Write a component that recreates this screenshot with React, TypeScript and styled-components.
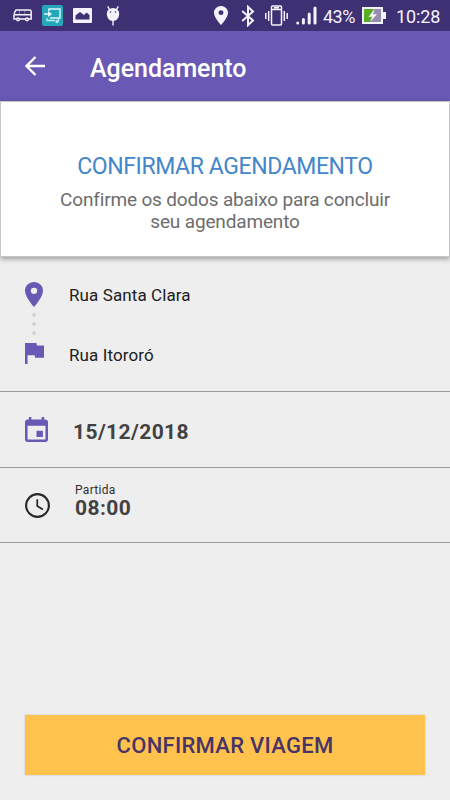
import React from 'react';
import styled, { createGlobalStyle } from 'styled-components';

const GlobalStyle = createGlobalStyle`
  * { box-sizing: border-box; }
  body { margin: 0; background: #eeeeee; font-family: Roboto, sans-serif; }
`;

const Screen = styled.div`
  display: flex;
  flex-direction: column;
  width: 450px;
  height: 800px;
  overflow: hidden;
  background: #eeeeee;
`;

const StatusBar = styled.div`
  display: flex;
  align-items: center;
  flex: none;
  height: 31px;
  padding-left: 13px;
  background: #3e3073;
  color: #f4f2fa;
`;

const Icon = styled.svg<{ $gap?: number }>`
  display: block;
  flex: none;
  margin-left: ${(p) => p.$gap ?? 0}px;
`;

const StatusText = styled.span<{ $gap: number; $spacing: number }>`
  margin-left: ${(p) => p.$gap}px;
  padding-top: 2px;
  font-size: 18px;
  line-height: 22px;
  letter-spacing: ${(p) => p.$spacing}px;
  white-space: nowrap;
`;

const AppBar = styled.header`
  display: flex;
  align-items: center;
  flex: none;
  height: 70px;
  padding: 0 0 0 25px;
  background: #6a59b4;
  color: #ffffff;
`;

const BackButton = styled.button`
  display: flex;
  width: 22px;
  padding: 0;
  border: 0;
  background: none;
  color: inherit;
`;

const Title = styled.h1`
  margin: 6px 0 0 43px;
  font-size: 25px;
  line-height: 30px;
  font-weight: 500;
  letter-spacing: -0.04px;
`;

const Card = styled.section`
  flex: none;
  height: 156px;
  padding-top: 50px;
  border: 1px solid #c6c6c8;
  background: #ffffff;
  box-shadow: 0 2px 5px rgba(0, 0, 0, 0.35);
  text-align: center;
`;

const CardTitle = styled.h2`
  margin: 0;
  color: #4386c9;
  font-size: 23px;
  line-height: 30px;
  font-weight: 400;
  letter-spacing: -0.4px;
`;

const CardText = styled.p`
  margin: 7px 0 0;
  color: #6d6d6d;
  font-size: 19px;
  line-height: 22px;
  letter-spacing: -0.16px;
`;

const Row = styled.div<{ $height: number }>`
  display: flex;
  flex: none;
  height: ${(p) => p.$height}px;
  padding-left: 25px;
  border-bottom: 1px solid #9b9b9b;
`;

const RouteMarks = styled.div`
  display: flex;
  flex-direction: column;
  width: 44px;
  padding-top: 25px;
`;

const Dots = styled.div`
  display: flex;
  flex-direction: column;
  gap: 5px;
  margin: 6px 0 8px 7px;
`;

const Dot = styled.i`
  width: 4px;
  height: 4px;
  border-radius: 50%;
  background: #d3d3d3;
`;

const Stops = styled.div`
  display: flex;
  flex-direction: column;
  gap: 36px;
  padding-top: 26px;
`;

const Stop = styled.span`
  color: #202020;
  font-size: 17px;
  line-height: 24px;
  letter-spacing: 0.1px;
`;

const IconCell = styled.div<{ $top: number; $width: number }>`
  width: ${(p) => p.$width}px;
  padding-top: ${(p) => p.$top}px;
`;

const DateText = styled.strong`
  padding-top: 26px;
  color: #424242;
  font-size: 21px;
  line-height: 28px;
  font-weight: 700;
  letter-spacing: 0.4px;
`;

const Departure = styled.div`
  display: flex;
  flex-direction: column;
  padding-top: 14px;
`;

const Caption = styled.span`
  color: #303030;
  font-size: 12px;
  line-height: 16px;
  letter-spacing: 0.3px;
`;

const TimeText = styled.strong`
  color: #424242;
  font-size: 21px;
  line-height: 20px;
  font-weight: 700;
  letter-spacing: 0.4px;
`;

const ConfirmButton = styled.button`
  flex: none;
  height: 60px;
  margin: auto 25px 25px;
  padding: 2px 0 0;
  border: 0;
  background: #ffc34d;
  box-shadow: 0 0 2px rgba(0, 0, 0, 0.18);
  color: #483467;
  font: 500 22px/30px Roboto, sans-serif;
  letter-spacing: 0.28px;
`;

function StatusIcons() {
  return (
    <>
      <Icon width="19" height="13" viewBox="0 0 19 13" fill="none" stroke="currentColor" strokeWidth="1.5">
        <path d="M3 1h13.500q1.700 0 1.700 1.700v7.300H1V6.500q0-3 2-5.500zM1.500 5.800h16.500" />
        <path d="M6.500 1v4.500M11.800 1v4.500" strokeWidth=".7" opacity=".5" />
        <circle cx="5" cy="10.300" r="1.400" fill="#3e3073" />
        <circle cx="14" cy="10.300" r="1.400" fill="#3e3073" />
      </Icon>
      <Icon $gap={10} width="21" height="21" viewBox="0 0 21 21" fill="none">
        <rect width="21" height="21" rx="2" fill="#25a6b9" />
        <path d="M7 6V4h11v9H8M2 9h5" stroke="#d9f6f8" strokeWidth="1.500" />
        <path d="m6 6 4 3-4 3z" fill="#e6fbfc" />
        <path d="M5 13v2.500h8M16.500 13v3" stroke="#bdeef1" strokeWidth="1.300" />
        <circle cx="15" cy="16.500" r="1.600" fill="#bdeef1" />
      </Icon>
      <Icon $gap={10} width="19" height="15" viewBox="0 0 19 15">
        <path fill="currentColor" fillRule="evenodd" d="M1 0h17q1 0 1 1v13q0 1-1 1H1q-1 0-1-1V1q0-1 1-1zM2.500 11.500h14V7l-3-2.500L11 7 7 4 2.500 7.500z" />
      </Icon>
      <Icon $gap={14} width="14" height="20" viewBox="0 0 14 20">
        <path d="M3.500 3.500 2 .8M10.500 3.500 12 .8M7 12v7" stroke="currentColor" strokeWidth="1.400" strokeLinecap="round" />
        <path fill="currentColor" d="M.8 7.500a6.200 5.500 0 0 1 12.400 0c0 4-2.200 7.500-6.200 7.500S.8 11.500.8 7.500z" />
        <circle cx="4.500" cy="6" r=".8" fill="#3e3073" />
        <circle cx="9.500" cy="6" r=".8" fill="#3e3073" />
      </Icon>
      <Icon $gap={94} width="14" height="19" viewBox="5 2 14 20" preserveAspectRatio="none">
        <path fill="currentColor" d="M12 2C8.130 2 5 5.130 5 9c0 5.250 7 13 7 13s7-7.750 7-13c0-3.870-3.130-7-7-7zm0 9.500a2.500 2.500 0 1 1 0-5 2.500 2.500 0 0 1 0 5z" />
      </Icon>
      <Icon $gap={13} width="14" height="22" viewBox="0 0 14 22" fill="none" stroke="currentColor" strokeWidth="2">
        <path d="M1.200 6 12 15.500l-5 4.700V1.800l5 4.700L1.200 16" />
      </Icon>
      <Icon $gap={10} width="23" height="21" viewBox="0 0 23 21" fill="none" stroke="currentColor" strokeWidth="1.500">
        <rect x="6.500" y="1" width="10" height="19" rx="1" />
        <path d="M6.500 4.500h10M9 2.700h5M3.700 6v10M.8 8v6M19.300 6v10M22.200 8v6" />
      </Icon>
      <Icon $gap={8} width="21" height="19" viewBox="0 0 21 19" stroke="currentColor" strokeWidth="3" strokeLinecap="round">
        <path d="M1.700 17v0M7.400 17v-3.500M13.200 17V8M19 17V2" />
      </Icon>
    </>
  );
}

export default function App() {
  return (
    <>
      <GlobalStyle />
      <Screen>
        <StatusBar>
          <StatusIcons />
          <StatusText $gap={6} $spacing={-0.5}>43%</StatusText>
          <Icon $gap={7} width="24" height="17" viewBox="0 0 24 17">
            <path fill="currentColor" d="M0 0h21v5h3v7h-3v5H0z" />
            <path fill="#978eae" d="M2 2h17v13H2z" />
            <path fill="#56ae20" d="M2 2h9L8 15H2z" />
            <path fill="#fff" d="m12.500 2-6 8 4-.5L8 15l7-8-4 .5z" />
          </Icon>
          <StatusText $gap={10} $spacing={-0.1}>10:28</StatusText>
        </StatusBar>
        <AppBar>
          <BackButton aria-label="Voltar">
            <Icon width="21" height="20" viewBox="0 0 21 20" fill="none" stroke="currentColor" strokeWidth="2.300">
              <path d="M20 10H2M10.500 1 1.500 10l9 9" />
            </Icon>
          </BackButton>
          <Title>Agendamento</Title>
        </AppBar>
        <Card>
          <CardTitle>CONFIRMAR AGENDAMENTO</CardTitle>
          <CardText>
            Confirme os dodos abaixo para concluir
            <br />
            seu agendamento
          </CardText>
        </Card>
        <Row $height={135}>
          <RouteMarks>
            <Icon width="18" height="25" viewBox="5 2 14 20" preserveAspectRatio="none">
              <path fill="#6a59b4" d="M12 2C8.130 2 5 5.130 5 9c0 5.250 7 13 7 13s7-7.750 7-13c0-3.870-3.130-7-7-7zm0 9.500a2.500 2.500 0 1 1 0-5 2.500 2.500 0 0 1 0 5z" />
            </Icon>
            <Dots>
              <Dot />
              <Dot />
              <Dot />
            </Dots>
            <Icon width="19" height="21" viewBox="5 4 15 17" preserveAspectRatio="none">
              <path fill="#6a59b4" d="M14.400 6 14 4H5v17h2v-7h5.600l.4 2h7V6z" />
            </Icon>
          </RouteMarks>
          <Stops>
            <Stop>Rua Santa Clara</Stop>
            <Stop>Rua Itororó</Stop>
          </Stops>
        </Row>
        <Row $height={76}>
          <IconCell $top={25} $width={48}>
            <Icon width="23" height="25" viewBox="3 1 18 20" preserveAspectRatio="none">
              <path fill="#6a59b4" d="M17 12h-5v5h5v-5zM16 1v2H8V1H6v2H5c-1.110 0-1.990.9-1.990 2L3 19c0 1.100.89 2 2 2h14c1.100 0 2-.9 2-2V5c0-1.100-.9-2-2-2h-1V1h-2zm3 18H5V8h14v11z" />
            </Icon>
          </IconCell>
          <DateText>15/12/2018</DateText>
        </Row>
        <Row $height={75}>
          <IconCell $top={25} $width={50}>
            <Icon width="25" height="25" viewBox="2 2 20 20" fill="none" stroke="#272727">
              <circle cx="12" cy="12" r="9.100" strokeWidth="1.700" />
              <path d="M11.800 7v5.500l4.500 2.700" strokeWidth="1.400" />
            </Icon>
          </IconCell>
          <Departure>
            <Caption>Partida</Caption>
            <TimeText>08:00</TimeText>
          </Departure>
        </Row>
        <ConfirmButton>CONFIRMAR VIAGEM</ConfirmButton>
      </Screen>
    </>
  );
}
